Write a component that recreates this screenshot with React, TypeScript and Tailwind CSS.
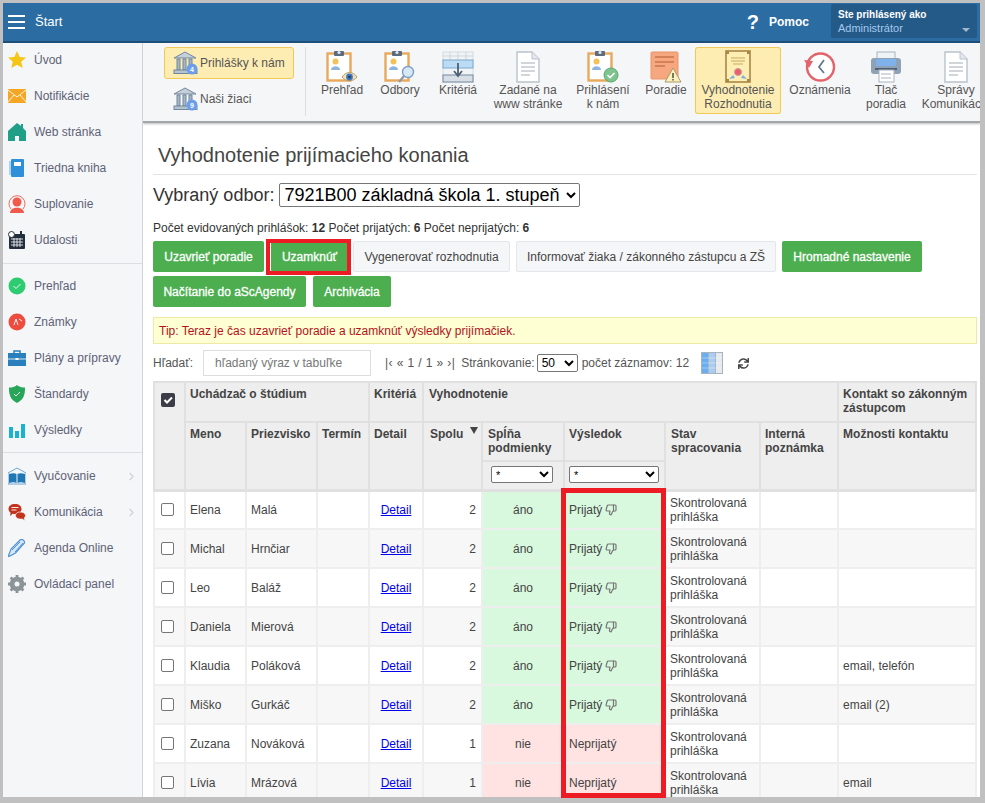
import type { ReactNode } from 'react';
import { ChevronRight, ThumbsDown } from 'lucide-react';
import { FaSync } from 'react-icons/fa';

const Clipboard = ({ badge }: { badge: ReactNode }) => (
  <svg width="32" height="33" viewBox="0 0 32 33">
    <rect x="1.5" y="3.5" width="23" height="27" fill="#fff" stroke="#e8a95c" strokeWidth="2.4" />
    <rect x="8" y="1" width="10" height="5" rx="1" fill="#5b6b80" />
    <circle cx="13" cy="2.5" r="1.6" fill="#dfe6ee" />
    <circle cx="9.5" cy="11.5" r="3" fill="#f3c15a" />
    <path d="M5 20c0-5 9-5 9 0z" fill="#8cb4df" />
    {badge}
  </svg>
);

const eye = (
  <g>
    <path d="M16 27c4-6 11-6 15 0-4 5-11 5-15 0z" fill="#f2e2bd" stroke="#b59a66" />
    <circle cx="23.5" cy="27" r="3.4" fill="#3f74b5" />
    <circle cx="23.5" cy="27" r="1.3" fill="#1c3b63" />
  </g>
);
const lens = (
  <g>
    <circle cx="24" cy="22" r="5.5" fill="#d6e8f8" stroke="#7f9fc0" strokeWidth="1.4" />
    <path d="M20 26l-5 6" stroke="#8f98a3" strokeWidth="2.2" />
  </g>
);
const okBadge = (
  <g>
    <circle cx="24" cy="25" r="7" fill="#7fc48e" stroke="#5ba86e" />
    <path d="M20.5 25l2.5 2.5 4.5-4.5" fill="none" stroke="#fff" strokeWidth="1.6" />
  </g>
);

const Doc = () => (
  <svg width="26" height="32" viewBox="0 0 26 32">
    <path d="M2 1h15l7 7v23H2z" fill="#fff" stroke="#b9c2cc" strokeWidth="1.4" />
    <path d="M17 1v7h7" fill="#e4e8ec" stroke="#b9c2cc" />
    <path d="M6 12h14M6 16h14M6 20h14M6 24h9" stroke="#a3adb8" strokeWidth="1.2" />
  </svg>
);

const Criteria = () => (
  <svg width="32" height="32" viewBox="0 0 32 32">
    <rect x="1" y="1" width="30" height="30" fill="#f1f4f7" stroke="#d3dae1" />
    <path d="M8 1v8M16 1v8M24 1v8M1 5h30" stroke="#cfd6dd" />
    <rect x="1" y="9" width="30" height="8" fill="#bcdcf6" stroke="#7ca8cc" />
    <rect x="1" y="24" width="30" height="7" fill="#d8dee6" stroke="#75889d" />
    <path d="M16 12v12M12 20l4 5 4-5" fill="none" stroke="#4e6074" strokeWidth="1.8" />
  </svg>
);

const Order = () => (
  <svg width="32" height="32" viewBox="0 0 32 32">
    <rect x="1" y="1" width="27" height="27" rx="1" fill="#f6a77f" stroke="#e8956b" />
    <path d="M5 6h19M5 11h19M5 15h10" stroke="#c9764e" strokeWidth="1.3" />
    <path d="M23 17l8 14H15z" fill="#fbf0c0" stroke="#a99a60" />
    <path d="M23 22v5M23 28v1.5" stroke="#55503a" strokeWidth="1.5" />
  </svg>
);

const Decision = () => (
  <svg width="26" height="33" viewBox="0 0 26 33">
    <rect x="1" y="1" width="24" height="31" fill="#fdeeb4" stroke="#a88645" strokeWidth="1.6" />
    <path d="M1 1h3v3H1zM22 1h3v3h-3zM1 29h3v3H1zM22 29h3v3h-3z" fill="#a88645" />
    <path d="M6 8h14M6 11h14M8 14h10" stroke="#c7a95a" strokeWidth="1.2" />
    <path d="M8 25l-4 4 6-1zM18 25l4 4-6-1z" fill="#7fb0e0" />
    <circle cx="13" cy="22" r="3.500" fill="#e8616a" stroke="#cf9aa0" />
  </svg>
);

const Clock = () => (
  <svg width="32" height="32" viewBox="0 0 32 32">
    <circle cx="16.5" cy="16" r="13.5" fill="#fff" stroke="#e3636a" strokeWidth="2.4" />
    <path d="M0 9l9 1-4 7z" fill="#e3636a" />
    <path d="M20 9l-5 7 5 6" fill="none" stroke="#66788f" strokeWidth="1.8" />
  </svg>
);

const Printer = () => (
  <svg width="32" height="32" viewBox="0 0 32 32">
    <rect x="7" y="1" width="18" height="9" fill="#f0f3f6" stroke="#a9b4bf" />
    <rect x="1" y="7" width="30" height="16" rx="3" fill="#8fa1b4" />
    <rect x="6" y="8" width="20" height="7" fill="#7fb1ea" />
    <rect x="5" y="17" width="22" height="2" fill="#4f6074" />
    <rect x="9" y="19" width="15" height="12" fill="#fff" stroke="#a9b4bf" />
    <path d="M11 23h10M11 27h10" stroke="#a9b4bf" />
  </svg>
);

const Bank = ({ count, color }: { count: string; color: string }) => (
  <svg width="26" height="26" viewBox="0 0 26 26">
    <path d="M1 8L12 2l11 6z" fill="#c5d0db" stroke="#73879c" />
    <path d="M4 9h3v11H4zM10 9h3v11h-3zM16 9h3v11h-3z" fill="#a5b6c7" stroke="#73879c" />
    <rect x="1" y="20" width="23" height="3.5" fill="#b5c2cf" stroke="#73879c" />
    <circle cx="19" cy="19" r="5.5" fill={color} />
    <text x="19" y="21.5" fontSize="7" fontWeight="700" textAnchor="middle" fill="#fff">{count}</text>
  </svg>
);

const sideIcons: Record<string, ReactNode> = {
  star: <path d="M9 0l2.7 6 6.3.6-4.8 4.2 1.5 6.2L9 13.700 3.300 17l1.500-6.200L0 6.600 6.300 6z" fill="#f5c518" />,
  mail: (
    <g>
      <rect x="0" y="2" width="18" height="14" fill="#f5a623" />
      <path d="M0 3l9 7 9-7M0 15l6-7M18 15l-6-7" fill="none" stroke="#fff" strokeWidth="0.9" />
    </g>
  ),
  home: <path d="M9 0l4 3V1h2v4l3 3v10h-7v-5H7v5H0V8z" fill="#1f9e88" />,
  book: (
    <g>
      <rect x="3" y="0" width="13" height="18" rx="1" fill="#2f8fd8" />
      <rect x="6" y="3" width="7" height="4" fill="#fff" />
      <path d="M2 2v14" stroke="#9cc9ec" strokeWidth="1.6" />
    </g>
  ),
  person: (
    <g>
      <path d="M3 14A8 8 0 1 1 15 14" fill="none" stroke="#ef5a4c" strokeWidth="0.9" />
      <circle cx="9" cy="7" r="4.500" fill="#ef5a4c" />
      <path d="M2 18c0-7 14-7 14 0z" fill="#ef5a4c" />
    </g>
  ),
  calendar: (
    <g>
      <rect x="1" y="3" width="16" height="15" rx="1" fill="#232f3e" />
      <path d="M3 8h12M3 11h12M3 14h12M6 7v9M9 7v9M12 7v9" stroke="#fff" strokeWidth="0.8" />
      <circle cx="3.500" cy="3.500" r="3" fill="#fff" stroke="#232f3e" />
      <rect x="12" y="0" width="2" height="4" fill="#232f3e" />
    </g>
  ),
  ok: (
    <g>
      <circle cx="9" cy="9" r="8.500" fill="#2ecc71" />
      <path d="M5.500 9l2.500 2.500 4.500-4.500" fill="none" stroke="#fff" strokeWidth="0.9" />
    </g>
  ),
  marks: (
    <g>
      <circle cx="9" cy="9" r="8.500" fill="#ed4c3f" />
      <path d="M6 12l2-6 2 6M11 6l3 2" fill="none" stroke="#fff" strokeWidth="0.9" />
    </g>
  ),
  case: (
    <g>
      <rect x="0" y="4" width="18" height="13" fill="#2a80bd" />
      <path d="M6 4V2h6v2" fill="none" stroke="#2a80bd" strokeWidth="1.5" />
      <path d="M0 10h18" stroke="#fff" strokeWidth="0.8" />
      <rect x="7.500" y="9" width="3" height="2" fill="#fff" />
    </g>
  ),
  shield: (
    <g>
      <path d="M9 0c2 2 5 2.500 8 2.500 0 7-1 12-8 15.500C2 14.500 1 9.500 1 2.500 4 2.500 7 2 9 0z" fill="#27a659" />
      <path d="M6 9l2 2 4-4" fill="none" stroke="#fff" strokeWidth="0.9" />
    </g>
  ),
  chart: <path d="M1 6h4v11H1zM7 10h4v7H7zM13 3h4v14h-4z" fill="#16b4d2" />,
  open: (
    <g>
      <path d="M0 6l9-5 9 5v11H0z" fill="none" stroke="#4b93c9" strokeWidth="0.8" />
      <path d="M1 7c3-1 6-1 7.500 0v9C7 15 4 15 1 16zM17 7c-3-1-6-1-7.500 0v9c1.500-1 4.500-1 7.500 0z" fill="#1f77b4" />
    </g>
  ),
  chat: (
    <g>
      <path d="M7 1c4 0 6.500 2 6.500 5S11 11 7 11c-.8 0-1.500 0-2.200-.2L2 13l.6-3.300C1.300 8.800.5 7.500.5 6 .5 3 3 1 7 1z" fill="#c2331f" />
      <path d="M12 9c3 0 5.500 1.300 5.500 3.500 0 1-.5 1.800-1.200 2.400l.5 2.600-2.800-1.500c-3 .5-6.500-.8-6.500-3.500 0-2 1.800-3.500 4.500-3.500z" fill="#c2331f" stroke="#f5f6f8" strokeWidth="0.7" />
      <path d="M3.500 4.500h7M3.500 7h5" stroke="#fff" strokeWidth="0.9" />
    </g>
  ),
  pen: (
    <g>
      <path d="M0 18l3-8L12 1c2-1.500 5 .5 4.500 3l-9 10z" fill="#d7e7f6" stroke="#4f94d4" strokeWidth="1.200" />
      <path d="M4 11l8-8M7 13l8-9" stroke="#4f94d4" strokeWidth="1" />
    </g>
  ),
  gear: (
    <g>
      <circle cx="9" cy="9" r="5.500" fill="none" stroke="#8b9499" strokeWidth="3.600" />
      <path d="M9 0v18M0 9h18M2.600 2.600l12.800 12.800M15.400 2.600L2.600 15.400" stroke="#8b9499" strokeWidth="2.800" />
      <circle cx="9" cy="9" r="2.500" fill="#f5f6f8" />
    </g>
  ),
};

const sideGroups = [
  {
    cls: '-mt-[1px]',
    items: [
      ['star', 'Úvod'],
      ['mail', 'Notifikácie'],
      ['home', 'Web stránka'],
      ['book', 'Triedna kniha'],
      ['person', 'Suplovanie'],
      ['calendar', 'Udalosti'],
    ],
  },
  {
    cls: 'mt-[5px] border-t border-[#dcdee1] pt-[4px]',
    items: [
      ['ok', 'Prehľad'],
      ['marks', 'Známky'],
      ['case', 'Plány a prípravy'],
      ['shield', 'Štandardy'],
      ['chart', 'Výsledky'],
    ],
  },
  {
    cls: 'mt-[4px] border-t border-[#dcdee1] pt-[5px]',
    items: [
      ['open', 'Vyučovanie', 'more'],
      ['chat', 'Komunikácia', 'more'],
      ['pen', 'Agenda Online'],
      ['gear', 'Ovládací panel'],
    ],
  },
];

const toolbarItems: { label: string[]; width: string; icon: ReactNode; active?: boolean }[] = [
  { label: ['Prehľad'], width: 'w-[58px]', icon: <Clipboard badge={eye} /> },
  { label: ['Odbory'], width: 'w-[58px]', icon: <Clipboard badge={lens} /> },
  { label: ['Kritériá'], width: 'w-[58px]', icon: <Criteria /> },
  { label: ['Zadané na', 'www stránke'], width: 'w-[82px]', icon: <Doc /> },
  { label: ['Prihlásení', 'k nám'], width: 'w-[68px]', icon: <Clipboard badge={okBadge} /> },
  { label: ['Poradie'], width: 'w-[58px]', icon: <Order /> },
  { label: ['Vyhodnotenie', 'Rozhodnutia'], width: 'w-[86px]', icon: <Decision />, active: true },
  { label: ['Oznámenia'], width: 'w-[78px]', icon: <Clock /> },
  { label: ['Tlač', 'poradia'], width: 'w-[54px]', icon: <Printer /> },
  { label: ['Správy', 'Komunikácie'], width: 'w-[86px]', icon: <Doc /> },
];

const rows = [
  ['Elena', 'Malá', 2, true, ''],
  ['Michal', 'Hrnčiar', 2, true, ''],
  ['Leo', 'Baláž', 2, true, ''],
  ['Daniela', 'Mierová', 2, true, ''],
  ['Klaudia', 'Poláková', 2, true, 'email, telefón'],
  ['Miško', 'Gurkáč', 2, true, 'email (2)'],
  ['Zuzana', 'Nováková', 1, false, ''],
  ['Lívia', 'Mrázová', 1, false, 'email'],
] as const;

const greenBtn = 'h-[31px] rounded-[2px] bg-[#4cae4f] text-xs whitespace-nowrap text-white [-webkit-text-stroke:0.3px_#fff]';
const grayBtn = 'h-[31px] rounded-[2px] border border-[#e3e6ea] bg-[#f5f6f8] text-xs whitespace-nowrap text-[#444]';
const th = 'border-2 border-[#e0e0e0] bg-[#eeeeee] px-[4px] pt-[4px] text-left align-top text-xs leading-[14px] font-bold text-[#444]';
const td = 'border-2 border-[#eeeeee] px-[4px] text-xs leading-[14px] text-[#444]';

export default function App() {
  return (
    <div className="relative h-[803px] w-[985px] overflow-hidden bg-[#c0c0c0] pt-[3px] pr-[5px] pb-[6px] pl-[3px] font-['Liberation_Sans',Arial,sans-serif]">
      <div className="flex h-full flex-col overflow-hidden bg-white">
        {/* Header */}
        <header className="flex h-[40px] shrink-0 items-center border-b-2 border-[#1d4f78] bg-[#2b6da3] text-white">
          <div className="ml-[5px] flex w-[17px] flex-col gap-[4px]">
            <span className="h-[2px] bg-white" />
            <span className="h-[2px] bg-white" />
            <span className="h-[2px] bg-white" />
          </div>
          <span className="ml-[10px] text-[13px]">Štart</span>
          <span className="ml-auto text-[20px] font-bold">?</span>
          <span className="ml-[10px] text-xs font-bold">Pomoc</span>
          <div className="relative mt-[-3px] mr-[3px] ml-[22px] h-[34px] w-[146px] rounded-[2px] bg-[#245a87] px-[7px] pt-[5px]">
            <div className="text-[10px] leading-[12px] font-bold">Ste prihlásený ako</div>
            <div className="mt-[1px] text-[11px] leading-[13px] text-[#a4c9ee]">Administrátor</div>
            <span className="absolute top-[24px] right-[7px] border-x-[4px] border-t-[4px] border-x-transparent border-t-[#9fb8cf]" />
          </div>
        </header>

        <div className="flex min-h-0 flex-1">
          {/* Sidebar */}
          <aside className="w-[140px] shrink-0 border-r border-[#cfd2d6] bg-[#f5f6f8]">
            {sideGroups.map((group, g) => (
              <div key={g} className={group.cls}>
                {group.items.map((item) => (
                  <div key={item[1]} className="flex h-[36px] items-center pl-[5px] text-xs text-[#5d6277]">
                    <svg width="18" height="18" viewBox="0 0 18 18" className="shrink-0">
                      {sideIcons[item[0]]}
                    </svg>
                    <span className="ml-[8px]">{item[1]}</span>
                    {item[2] && <ChevronRight size={13} className="mr-[4px] ml-auto text-[#cdd0d4]" />}
                  </div>
                ))}
              </div>
            ))}
          </aside>

          <main className="flex min-w-0 flex-1 flex-col overflow-hidden">
            {/* Toolbar */}
            <div className="flex h-[80px] shrink-0 border-b-2 border-[#a3a5a8] bg-[#f5f6f8] shadow-[0_1px_2px_#bbb]">
              <div className="mt-[4px] mb-[5px] ml-[21px] w-[142px] shrink-0 border-r border-[#dcdee1]">
                <div className="flex h-[32px] w-[130px] items-center rounded-[3px] border border-[#f2c956] bg-[#fdedb3] pl-[8px] text-xs text-[#555]">
                  <Bank count="4" color="#6d9eeb" />
                  <span className="ml-[1px]">Prihlášky k nám</span>
                </div>
                <div className="mt-[4px] flex h-[32px] items-center pl-[9px] text-xs text-[#555]">
                  <Bank count="9" color="#6d9eeb" />
                  <span className="ml-[1px]">Naši žiaci</span>
                </div>
              </div>
              <div className="ml-[7px] flex">
                {toolbarItems.map((item) => (
                  <div
                    key={item.label[0]}
                    className={`mt-[4px] flex h-[67px] shrink-0 flex-col items-center rounded-[3px] text-center text-xs leading-[14px] whitespace-nowrap text-[#555] ${item.width} ${item.active ? 'bg-[#fdedb3] shadow-[inset_0_0_0_1px_#f2c956]' : ''}`}
                  >
                    <div className="flex h-[36px] items-end">{item.icon}</div>
                    {item.label.map((line) => (
                      <span key={line}>{line}</span>
                    ))}
                  </div>
                ))}
              </div>
            </div>

            {/* Content */}
            <div className="min-h-0 flex-1 pr-[3px] pl-[10px]">
              <h1 className="mt-[21px] ml-[5px] text-[20px] leading-[23px] text-[#444]">Vyhodnotenie prijímacieho konania</h1>
              <div className="mt-[7px] border-t border-[#e5e5e5]" />
              <div className="mt-[7px] flex h-[26px] items-center gap-[5px] text-[18px] text-[#333]">
                <span>Vybraný odbor:</span>
                <select className="h-[24px] w-[301px] rounded-[2px] border border-[#767676] bg-white text-[18px] text-black">
                  <option>7921B00 základná škola 1. stupeň</option>
                </select>
              </div>
              <p className="mt-[13px] text-xs leading-[14px] text-[#333]">
                Počet evidovaných prihlášok: <b>12</b> Počet prijatých: <b>6</b> Počet neprijatých: <b>6</b>
              </p>
              <div className="mt-[6px] flex">
                <button className={`${greenBtn} w-[111px]`}>Uzavrieť poradie</button>
                <button className={`${greenBtn} ml-[7px] w-[77px]`}>Uzamknúť</button>
                <button className={`${grayBtn} ml-[5px] w-[157px]`}>Vygenerovať rozhodnutia</button>
                <button className={`${grayBtn} ml-[6px] w-[260px]`}>Informovať žiaka / zákonného zástupcu a ZŠ</button>
                <button className={`${greenBtn} ml-[6px] w-[140px]`}>Hromadné nastavenie</button>
              </div>
              <div className="mt-[4px] flex gap-[7px]">
                <button className={`${greenBtn} w-[153px]`}>Načítanie do aScAgendy</button>
                <button className={`${greenBtn} w-[78px]`}>Archivácia</button>
              </div>
              <div className="mt-[10px] flex h-[27px] items-center border border-[#efe9a8] bg-[#ffffd4] pl-[5px] text-xs text-[#b5121b]">
                Tip: Teraz je čas uzavrieť poradie a uzamknúť výsledky prijímačiek.
              </div>
              <div className="mt-[6px] flex h-[26px] items-center text-xs text-[#555]">
                <span className="w-[50px]">Hľadať:</span>
                <input
                  placeholder="hľadaný výraz v tabuľke"
                  className="h-[26px] w-[168px] border border-[#dddddd] pl-[11px] text-xs placeholder:text-[#777]"
                />
                <span className="ml-[14px] tracking-[0.4px]">|‹ « 1 / 1 » ›|</span>
                <span className="ml-[6px]">Stránkovanie:</span>
                <select className="ml-[2px] h-[18px] w-[41px] rounded-[2px] border border-[#767676] bg-white text-xs text-black">
                  <option>50</option>
                </select>
                <span className="ml-[4px]">počet záznamov: 12</span>
                <svg width="22" height="22" viewBox="0 0 22 22" className="ml-[12px]">
                  <rect width="22" height="22" fill="#a9b3bd" />
                  <rect x="1" y="1" width="6" height="20" fill="#6aaef0" />
                  <rect x="8" y="1" width="6" height="20" fill="#a9cdf2" />
                  <rect x="15" y="1" width="6" height="20" fill="#e6eaee" />
                  <path d="M1 6h20M1 11h20M1 16h20" stroke="#fff" strokeWidth="0.6" opacity="0.6" />
                </svg>
                <FaSync size={11} className="ml-[15px] text-[#444]" />
              </div>
              <table className="mt-[5px] w-[824px] table-fixed border-collapse">
                <colgroup>
                  <col className="w-[31px]" />
                  <col className="w-[61px]" />
                  <col className="w-[71px]" />
                  <col className="w-[52px]" />
                  <col className="w-[54px]" />
                  <col className="w-[59px]" />
                  <col className="w-[82px]" />
                  <col className="w-[101px]" />
                  <col className="w-[95px]" />
                  <col className="w-[78px]" />
                  <col />
                </colgroup>
                <thead>
                  <tr className="h-[40px]">
                    <th rowSpan={3} className={`${th} !pt-[10px] !pl-[6px]`}>
                      <span className="flex h-[14px] w-[14px] items-center justify-center rounded-[2px] bg-[#3a3d45]">
                        <svg width="10" height="10" viewBox="0 0 10 10">
                          <path d="M1.500 5l2.500 2.500 5-5" fill="none" stroke="#fff" strokeWidth="2" />
                        </svg>
                      </span>
                    </th>
                    <th colSpan={3} className={th}>Uchádzač o štúdium</th>
                    <th className={th}>Kritériá</th>
                    <th colSpan={5} className={`${th} !pl-[5px]`}>Vyhodnotenie</th>
                    <th className={th}>Kontakt so zákonným zástupcom</th>
                  </tr>
                  <tr className="h-[39px]">
                    <th rowSpan={2} className={th}>Meno</th>
                    <th rowSpan={2} className={th}>Priezvisko</th>
                    <th rowSpan={2} className={th}>Termín</th>
                    <th rowSpan={2} className={th}>Detail</th>
                    <th rowSpan={2} className={`${th} relative !pl-[6px]`}>
                      Spolu
                      <span className="absolute top-[4px] right-[3px] border-x-[4px] border-t-[7px] border-x-transparent border-t-[#444]" />
                    </th>
                    <th className={`${th} !pl-[5px]`}>Spĺňa podmienky</th>
                    <th className={th}>Výsledok</th>
                    <th rowSpan={2} className={`${th} !pl-[5px]`}>Stav spracovania</th>
                    <th rowSpan={2} className={th}>Interná poznámka</th>
                    <th rowSpan={2} className={th}>Možnosti kontaktu</th>
                  </tr>
                  <tr className="h-[29px] border-b-[3px] border-[#e0e0e0]">
                    <th className={`${th} !pt-[4px]`}>
                      <select className="ml-[4px] block h-[17px] w-[62px] rounded-[2px] border border-[#767676] bg-white text-[11px] font-normal text-black">
                        <option>*</option>
                      </select>
                    </th>
                    <th className={`${th} !pt-[4px]`}>
                      <select className="block h-[17px] w-[90px] rounded-[2px] border border-[#767676] bg-white text-[11px] font-normal text-black">
                        <option>*</option>
                      </select>
                    </th>
                  </tr>
                </thead>
                <tbody>
                  {rows.map((row, i) => (
                    <tr key={row[0]} className={`h-[39px] ${i % 2 ? 'bg-[#f7f7f7]' : 'bg-white'}`}>
                      <td className={`${td} !pl-[6px]`}>
                        <span className="block h-[13px] w-[13px] rounded-[2px] border border-[#767676] bg-white" />
                      </td>
                      <td className={td}>{row[0]}</td>
                      <td className={td}>{row[1]}</td>
                      <td className={td} />
                      <td className={`${td} text-center`}>
                        <a href="#" className="text-[#0000ee] underline">Detail</a>
                      </td>
                      <td className={`${td} !pr-[5px] text-right`}>{row[2]}</td>
                      <td className={`${td} text-center ${row[3] ? 'bg-[#d9f9df]' : 'bg-[#ffe2e2]'}`}>{row[3] ? 'áno' : 'nie'}</td>
                      <td className={`${td} ${row[3] ? 'bg-[#d9f9df]' : 'bg-[#ffe2e2]'}`}>
                        {row[3] ? (
                          <span className="flex items-center gap-[3px]">
                            Prijatý <ThumbsDown size={12} strokeWidth={2.4} className="text-[#777]" />
                          </span>
                        ) : (
                          'Neprijatý'
                        )}
                      </td>
                      <td className={td}>Skontrolovaná prihláška</td>
                      <td className={td} />
                      <td className={td}>{row[4]}</td>
                    </tr>
                  ))}
                </tbody>
              </table>
            </div>
          </main>
        </div>
      </div>

      {/* Red highlights */}
      <div className="absolute top-[239px] left-[266px] h-[36px] w-[85px] border-[4px] border-[#ed1c24]" />
      <div className="absolute top-[488px] left-[561px] h-[310px] w-[105px] border-[5px] border-[#ed1c24]" />
    </div>
  );
}
